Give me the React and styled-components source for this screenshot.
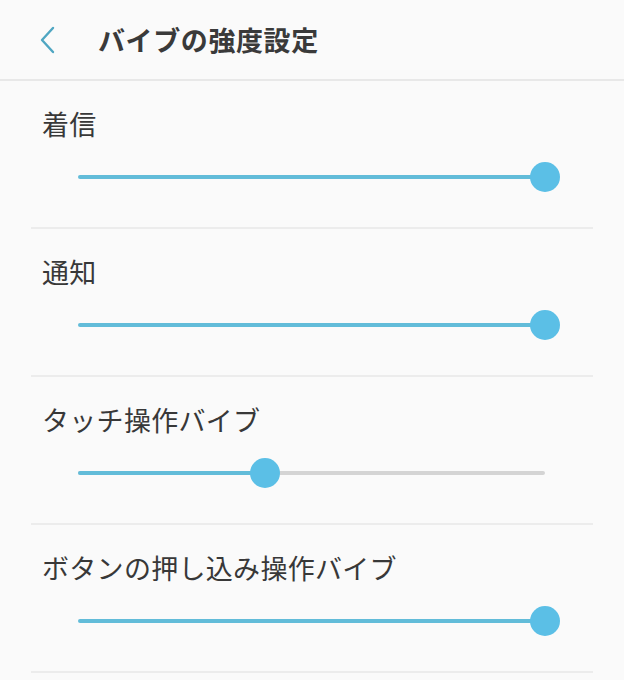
import React from 'react'
import styled, { createGlobalStyle } from 'styled-components'

const GlobalStyle = createGlobalStyle`
  html, body {
    margin: 0;
    padding: 0;
    background-color: #fafafa;
  }
  body {
    font-family: "Noto Sans CJK JP", "Noto Sans", sans-serif;
    color: #333333;
  }
`

const Page = styled.div`
  width: 624px;
  min-height: 680px;
  background-color: #fafafa;
`

const Header = styled.div`
  height: 79px;
  display: flex;
  align-items: center;
  padding-left: 37px;
  border-bottom: 2px solid #e8e8e8;
`

const BackButton = styled.div`
  width: 20px;
  height: 30px;
  display: flex;
  align-items: center;
  justify-content: center;
`

const Title = styled.h1`
  margin: 0 0 0 41px;
  font-size: 27px;
  font-weight: 700;
  color: #3a3a3a;
  letter-spacing: 0.6px;
`

const List = styled.div`
  margin: 0 31px;
`

const Row = styled.div`
  height: 148px;
  border-bottom: 2px solid #ececec;
  padding-top: 25px;
  box-sizing: border-box;
`

const Label = styled.div`
  padding-left: 11px;
  font-size: 27px;
  line-height: 36px;
  color: #383838;
  letter-spacing: 0.3px;
`

const SliderWrap = styled.div`
  position: relative;
  margin: 20px 0 0 47px;
  width: 467px;
  height: 30px;
  display: flex;
  align-items: center;
`

const Track = styled.div`
  width: 100%;
  height: 4px;
  background-color: #d4d4d4;
  border-radius: 2px;
  overflow: hidden;
`

const Fill = styled.div`
  height: 100%;
  background-color: #62bcd9;
`

const Thumb = styled.div`
  position: absolute;
  top: 0;
  width: 30px;
  height: 30px;
  margin-left: -15px;
  border-radius: 50%;
  background-color: #5bbfe6;
`

const Slider = ({ value }) => (
  <SliderWrap>
    <Track>
      <Fill style={{ width: `${value * 100}%` }} />
    </Track>
    <Thumb style={{ left: `${value * 100}%` }} />
  </SliderWrap>
)

const items = [
  { label: '着信', value: 1 },
  { label: '通知', value: 1 },
  { label: 'タッチ操作バイブ', value: 0.4 },
  { label: 'ボタンの押し込み操作バイブ', value: 1 },
]

const App = () => (
  <Page>
    <GlobalStyle />
    <Header>
      <BackButton>
        <svg width="18" height="30" viewBox="0 0 18 30">
          <path d="M15 3 L4 15 L15 27" fill="none" stroke="#4fa6c2" strokeWidth="2.4" strokeLinecap="round" strokeLinejoin="round" />
        </svg>
      </BackButton>
      <Title>バイブの強度設定</Title>
    </Header>
    <List>
      {items.map(item => (
        <Row key={item.label}>
          <Label>{item.label}</Label>
          <Slider value={item.value} />
        </Row>
      ))}
    </List>
  </Page>
)

export default App
